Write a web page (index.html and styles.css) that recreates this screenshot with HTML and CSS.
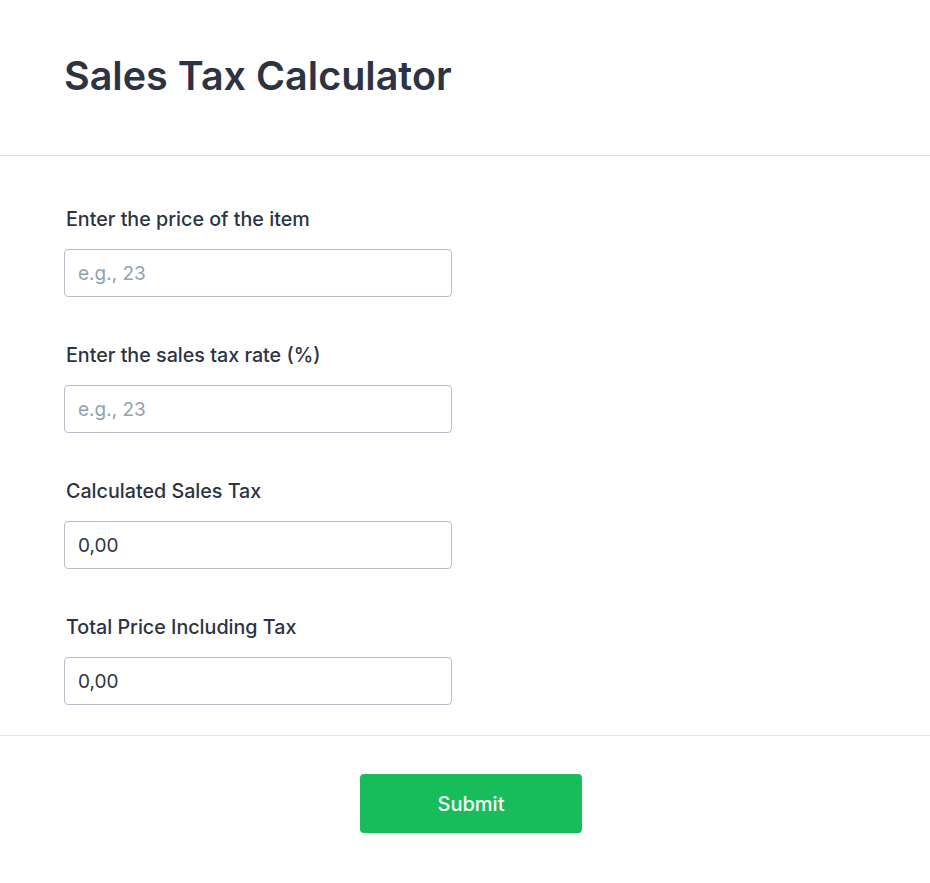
FILE: index.html
```html
<!DOCTYPE html>
<html lang="en">
<head>
<meta charset="utf-8">
<title>Sales Tax Calculator</title>
<link rel="stylesheet" href="styles.css">
</head>
<body>
<div class="page">
  <header class="header">
    <h1 class="title">Sales Tax Calculator</h1>
  </header>
  <form class="form">
    <div class="field">
      <label class="label" for="price">Enter the price of the item</label>
      <input class="input" id="price" type="text" placeholder="e.g., 23">
    </div>
    <div class="field">
      <label class="label" for="rate">Enter the sales tax rate (%)</label>
      <input class="input" id="rate" type="text" placeholder="e.g., 23">
    </div>
    <div class="field">
      <label class="label" for="tax">Calculated Sales Tax</label>
      <input class="input" id="tax" type="text" value="0,00" readonly>
    </div>
    <div class="field">
      <label class="label" for="total">Total Price Including Tax</label>
      <input class="input" id="total" type="text" value="0,00" readonly>
    </div>
  </form>
  <div class="actions">
    <button class="submit" type="button">Submit</button>
  </div>
</div>
</body>
</html>
```
FILE: styles.css
```css
* { box-sizing: border-box; }
html, body { margin: 0; padding: 0; background: #ffffff; }
body {
  font-family: Inter, "Noto Sans", "Liberation Sans", sans-serif;
  color: #2c3345;
}
.header {
  height: 156px;
  padding: 52px 64px 0;
  border-bottom: 1px solid #d8dae9;
}
.title {
  margin: 0;
  font-size: 39.5px;
  line-height: 48px;
  font-weight: 600;
  color: #2c3345;
}
.form {
  display: flex;
  flex-direction: column;
  gap: 46px;
  padding: 51px 64px 30px;
  border-bottom: 1px solid #e3e5ee;
}
.field {
  display: flex;
  flex-direction: column;
  gap: 18px;
}
.label {
  padding-left: 2px;
  font-size: 19.7px;
  line-height: 24px;
  font-weight: 500;
  color: #2c3345;
}
.input {
  width: 388px;
  height: 48px;
  padding: 0 13px;
  border: 1px solid #b8bdc9;
  border-radius: 4px;
  font-family: inherit;
  font-size: 19px;
  color: #2c3345;
  background: #ffffff;
  outline: none;
}
.input::placeholder { color: #8fa1b3; opacity: 1; }
.actions {
  display: flex;
  justify-content: center;
  padding: 38px 0 0 12px;
}
.submit {
  width: 222px;
  height: 59px;
  border: none;
  border-radius: 4px;
  background: #18bd5b;
  color: #ffffff;
  font-family: inherit;
  font-size: 20px;
  font-weight: 500;
  cursor: pointer;
}
```
